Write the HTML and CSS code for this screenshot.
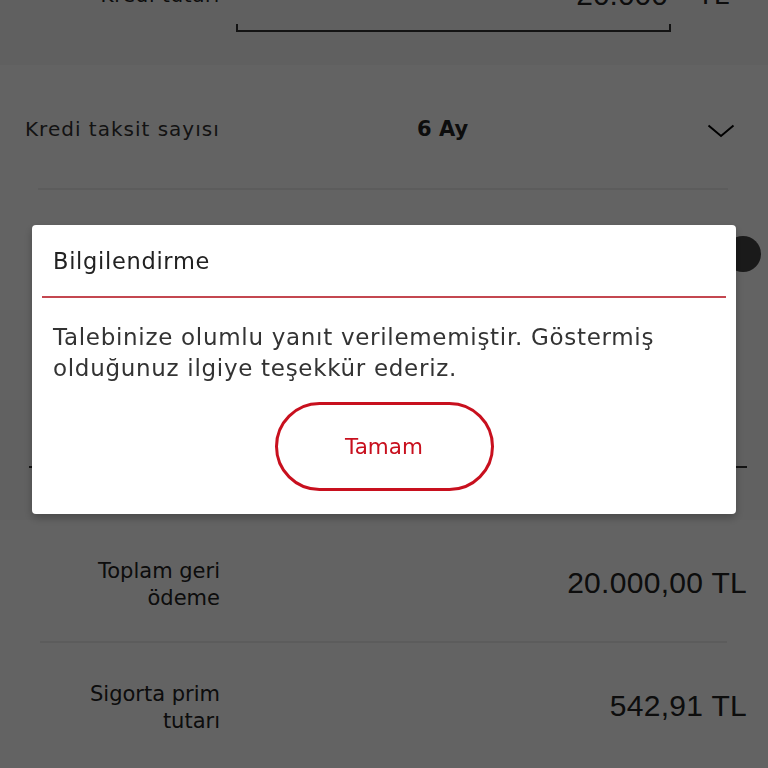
FILE: index.html
```html
<!DOCTYPE html>
<html lang="tr">
<head>
<meta charset="utf-8">
<link rel="stylesheet" href="styles.css">
</head>
<body>
<div class="page">
  <section class="sec sec-amount">
    <div class="amount-row">
      <span class="amount-label">Kredi tutarı</span>
      <span class="amount-value">20.000</span>
      <span class="amount-cur">TL</span>
    </div>
    <div class="amount-line-wrap"><div class="amount-line"></div></div>
  </section>
  <section class="sec sec-main">
    <div class="row-taksit">
      <span class="lbl-left">Kredi taksit sayısı</span>
      <span class="taksit-val">6 Ay</span>
      <svg class="chev" width="28" height="14" viewBox="0 0 28 14"><path d="M1.5 1.5 L14 12 L26.5 1.5" fill="none" stroke="#000" stroke-width="2"/></svg>
    </div>
    <div class="sep"></div>
    <div class="row-toggle">
      <span class="toggle-knob"></span>
    </div>
  </section>
  <section class="sec sec-band"></section>
  <section class="sec sec-hidden">
    <div class="hidden-line"></div>
  </section>
  <section class="sec sec-rows">
    <div class="info-row">
      <span class="info-lbl">Toplam geri<br>ödeme</span>
      <span class="info-val">20.000,00 TL</span>
    </div>
    <div class="sep sep-rows"></div>
    <div class="info-row">
      <span class="info-lbl">Sigorta prim<br>tutarı</span>
      <span class="info-val">542,91 TL</span>
    </div>
  </section>
</div>

<div class="overlay">
  <div class="dialog">
    <div class="dlg-title">Bilgilendirme</div>
    <div class="dlg-rule"></div>
    <p class="dlg-text">Talebinize olumlu yanıt verilememiştir. Göstermiş olduğunuz ilgiye teşekkür ederiz.</p>
    <div class="dlg-actions">
      <button class="btn-ok">Tamam</button>
    </div>
  </div>
</div>
</body>
</html>
```
FILE: styles.css
```css
* { box-sizing: border-box; }
html, body { margin: 0; padding: 0; }
body {
  width: 768px;
  height: 768px;
  overflow: hidden;
  font-family: "DejaVu Sans", "Noto Sans", sans-serif;
  color: #333;
  background: #fff;
}
.page { width: 768px; }
.sec { background: #fff; }

.sec-amount {
  height: 65px;
  overflow: hidden;
  background: #f8f8f8;
}
.amount-row {
  display: flex;
  align-items: center;
  margin-top: -20px;
  height: 30px;
  font-size: 20px;
  letter-spacing: 0.6px;
  color: #222;
}
.amount-label { width: 220px; text-align: right; }
.amount-value {
  width: 448px;
  text-align: right;
  font-family: "Liberation Sans", sans-serif;
  font-size: 30px;
  letter-spacing: 0;
}
.amount-cur {
  margin-left: 29px;
  font-family: "Liberation Sans", sans-serif;
  font-size: 28px;
  letter-spacing: 0;
}
.amount-line-wrap { padding: 14px 0 0 236px; }
.amount-line {
  width: 435px;
  height: 8px;
  border: 2px solid #333;
  border-top: none;
}

.sec-main { height: 245px; padding: 0 25px; }
.row-taksit {
  display: flex;
  align-items: center;
  height: 123px;
  font-size: 20px;
  color: #333;
}
.lbl-left { width: 392px; letter-spacing: 1px; padding-top: 4px; }
.taksit-val { font-weight: 700; font-size: 21px; flex: 1; color: #222; padding-top: 4px; }
.chev { margin-right: 8px; margin-top: 8px; }
.sep { height: 2px; background: #ececec; margin: 0 15px 0 13px; }
.row-toggle {
  display: flex;
  justify-content: flex-end;
  align-items: flex-start;
  height: 120px;
  padding-top: 46px;
}
.toggle-knob {
  width: 36px; height: 36px; border-radius: 50%;
  background: #444;
  margin-right: -18px;
}

.sec-band { height: 90px; background: #fdfdfd; }
.sec-hidden {
  height: 120px;
  padding: 66px 21px 0 29px;
  background: #f9f9f9;
}
.hidden-line { height: 2px; background: #333; }

.sec-rows { padding: 0 21px 0 40px; }
.info-row {
  display: flex;
  align-items: center;
  justify-content: space-between;
  height: 123px;
}
.info-lbl {
  width: 180px;
  text-align: right;
  font-size: 21px;
  line-height: 27px;
  color: #222;
  padding-top: 7px;
}
.info-val {
  font-family: "Liberation Sans", sans-serif;
  font-size: 30px;
  letter-spacing: 0.3px;
  color: #222;
  padding-top: 3px;
}
.sep-rows { margin: -2px 20px 0 0; }

.overlay {
  position: fixed;
  inset: 0;
  background: rgba(0, 0, 0, 0.61);
}
.dialog {
  position: absolute;
  left: 32px;
  top: 225px;
  width: 704px;
  height: 289px;
  background: #fff;
  border-radius: 4px;
  padding: 0 10px;
  box-shadow: 0 4px 10px rgba(0,0,0,0.25);
}
.dlg-title {
  padding: 23px 0 0 11px;
  height: 71px;
  font-size: 22.5px;
  letter-spacing: 0.7px;
  color: #222;
}
.dlg-rule { height: 2px; background: #c44750; }
.dlg-text {
  margin: 24px 0 0 11px;
  font-size: 23px;
  letter-spacing: 0.7px;
  line-height: 31px;
  color: #333;
}
.dlg-actions {
  display: flex;
  justify-content: center;
  margin-top: 18px;
}
.btn-ok {
  width: 219px;
  height: 89px;
  border: 3px solid #c8101e;
  border-radius: 45px;
  background: #fff;
  color: #c8101e;
  font-family: inherit;
  font-size: 21.5px;
}
```
